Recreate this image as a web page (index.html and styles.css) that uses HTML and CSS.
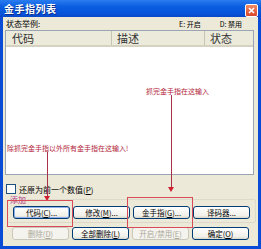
FILE: index.html
```html
<!DOCTYPE html>
<html>
<head>
  <title>金手指列表</title>
  <link rel="stylesheet" href="styles.css">
</head>
<body>
  <div class="window">
    <div class="titlebar">
      <span class="title">金手指列表</span>
      <span class="close">
        <svg width="11" height="11" viewBox="0 0 11 11">
          <path d="M3 3 L8 8 M8 3 L3 8" stroke="#fff" stroke-width="1.6" />
        </svg>
      </span>
    </div>
    <div class="client">
      <div class="legend">
        <span>状态举例:</span>
        <span class="legend-keys">
          <span>E: 开启</span>
          <span>D: 禁用</span>
        </span>
      </div>
      <div class="list">
        <div class="list-head">
          <div class="col col-code">代码</div>
          <div class="col col-desc">描述</div>
          <div class="col col-state">状态</div>
        </div>
      </div>
      <label class="check">
        <span class="box"></span>
        <span>还原为前一个数值(<u>P</u>)</span>
      </label>
      <div class="group">
        <span class="group-title">添加</span>
        <div class="btn-row">
          <button class="btn focus">代码(<u>C</u>)...</button>
          <button class="btn">修改(<u>M</u>)...</button>
          <button class="btn">金手指(<u>G</u>)...</button>
          <button class="btn">译码器...</button>
        </div>
      </div>
      <div class="btn-row bottom">
        <button class="btn" disabled>删除(<u>D</u>)</button>
        <button class="btn">全部删除(<u>L</u>)</button>
        <button class="btn" disabled>开启/禁用(<u>E</u>)</button>
        <button class="btn">确定(<u>O</u>)</button>
      </div>
    </div>

    <!-- red notes drawn over the dialog -->
    <span class="note note-top">抓完金手指在这输入</span>
    <span class="note note-left">除抓完金手指以外所有金手指在这输入!</span>
    <span class="arrow arrow-top"></span>
    <span class="arrow arrow-left"></span>
    <span class="mark mark-code"></span>
    <span class="mark mark-gold"></span>
  </div>
</body>
</html>
```

FILE: styles.css
```css
body {
  margin: 0;
  font-family: "Noto Sans CJK SC", "Liberation Sans", sans-serif;
  background: #ffffff;
}
.window {
  position: relative;
  width: 261px;
  height: 249px;
  background: #0b4cd6;
  display: flex;
  flex-direction: column;
  box-sizing: border-box;
}
.titlebar {
  height: 17px;
  display: flex;
  align-items: center;
  justify-content: space-between;
  padding: 0 3px 0 4px;
  background: linear-gradient(#2a7cf0, #0a5de0 40%, #0752d8 85%, #0a46c4);
}
.title {
  color: #ffffff;
  font-size: 10px;
  font-weight: bold;
  letter-spacing: 0.5px;
  text-shadow: 1px 1px 0 #0a2e8a;
}
.close {
  width: 11px;
  height: 11px;
  margin-top: 3px;
  background: linear-gradient(#f08a66, #d8482a);
  border: 1px solid #ffffff;
  border-radius: 2px;
  display: flex;
}
.client {
  flex: 1;
  margin: 0 3px 3px;
  background: #ece9d8;
  display: flex;
  flex-direction: column;
  font-size: 8px;
  color: #000000;
}
.legend {
  height: 13px;
  display: flex;
  align-items: center;
  justify-content: space-between;
  padding: 0 16px 0 3px;
}
.legend-keys {
  display: flex;
  gap: 19px;
  font-size: 7px;
}
.list {
  margin-left: 2px;
  width: 249px;
  height: 145px;
  box-sizing: border-box;
  border: 1px solid #9aa5b4;
  background: #ffffff;
}
.list-head {
  height: 14px;
  display: flex;
  background: #ebeadb;
  border-bottom: 2px solid #d6d2c2;
  font-size: 11px;
  color: #333333;
}
.col {
  display: flex;
  align-items: center;
  border-right: 1px solid #c7c5b2;
  box-sizing: border-box;
}
.col-code {
  width: 106px;
  padding-left: 6px;
}
.col-desc {
  width: 93px;
  padding-left: 5px;
}
.col-state {
  flex: 1;
  padding-left: 5px;
  border-right: none;
}
.check {
  display: flex;
  align-items: center;
  gap: 3px;
  margin: 9px 0 0 3px;
  height: 10px;
}
.box {
  width: 8px;
  height: 8px;
  background: #ffffff;
  border: 1px solid #1c5180;
}
.group {
  position: relative;
  margin: 5px 2px 0 4px;
  padding: 6px 0 3px 5px;
  border: 1px solid #dcdacb;
  border-radius: 2px;
}
.group-title {
  position: absolute;
  top: -6px;
  left: 1px;
  padding: 0 1px;
  background: #ece9d8;
  color: #b03a8a;
  font-size: 8px;
}
.btn-row {
  display: flex;
  gap: 3px;
}
.btn-row.bottom {
  margin: 4px 0 0 9px;
}
.btn {
  width: 57px;
  height: 13px;
  padding: 0;
  font-family: inherit;
  font-size: 7.5px;
  color: #000000;
  background: linear-gradient(#ffffff, #f0efe8 80%, #d8d6c8);
  border: 1px solid #003c74;
  border-radius: 3px;
}
.btn.focus {
  box-shadow: inset 0 0 0 1px #8fb0ec;
}
.btn:disabled {
  color: #aca899;
  border-color: #c9c7ba;
  background: #f4f3ee;
}
.note {
  position: absolute;
  color: #b3263a;
  font-size: 7px;
  white-space: nowrap;
}
.note-top {
  left: 146px;
  top: 86px;
}
.note-left {
  left: 7px;
  top: 143px;
}
.arrow {
  position: absolute;
  width: 1px;
  background: #a8324a;
}
.arrow::after {
  content: "";
  position: absolute;
  left: -3px;
  bottom: -4px;
  border-left: 3.5px solid transparent;
  border-right: 3.5px solid transparent;
  border-top: 5px solid #d02030;
}
.arrow-top {
  left: 171px;
  top: 95px;
  height: 93px;
}
.arrow-left {
  left: 47px;
  top: 152px;
  height: 45px;
}
.mark {
  position: absolute;
  border: 1px solid #d84a55;
}
.mark-code {
  left: 7px;
  top: 200px;
  width: 64px;
  height: 25px;
}
.mark-gold {
  left: 127px;
  top: 197px;
  width: 64px;
  height: 29px;
}
```
